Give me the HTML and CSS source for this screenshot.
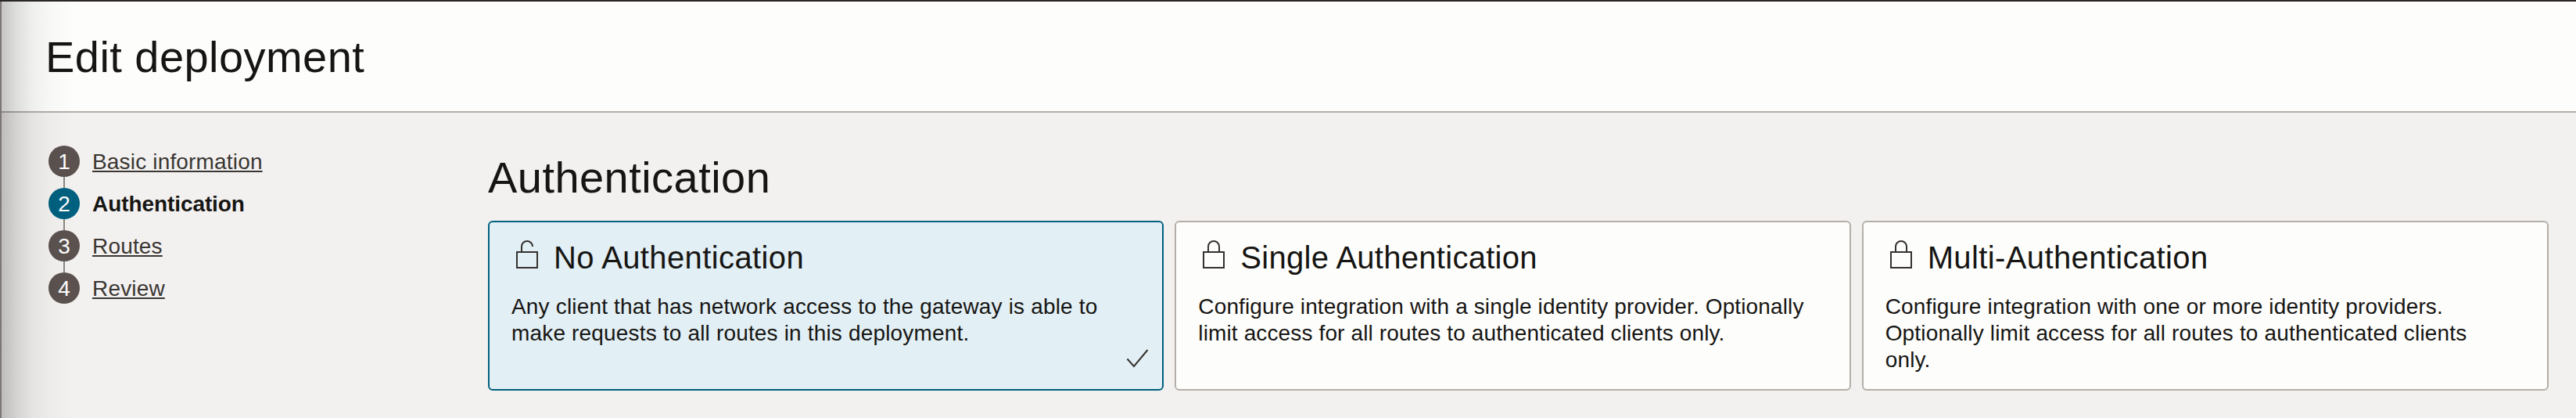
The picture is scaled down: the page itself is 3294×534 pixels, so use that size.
FILE: index.html
```html
<!DOCTYPE html>
<html lang="en">
<head>
<meta charset="utf-8">
<title>Edit deployment</title>
<link rel="stylesheet" href="styles.css">
</head>
<body>
<div class="panel">
  <header class="header"><h1 class="title">Edit deployment</h1></header>
  <div class="body">
    <nav class="steps">
      <ol class="step-list">
        <li class="step"><span class="num">1</span><a class="link">Basic information</a></li>
        <li class="step current"><span class="num">2</span><span class="link">Authentication</span></li>
        <li class="step"><span class="num">3</span><a class="link">Routes</a></li>
        <li class="step"><span class="num">4</span><a class="link">Review</a></li>
      </ol>
    </nav>
    <main class="main">
      <h2 class="section-title">Authentication</h2>
      <div class="cards">
        <section class="card selected">
          <h3 class="card-title">
            <svg class="icon" viewBox="0 0 40 48"><path d="M7 17H33V37H7Z M13 17V10A7 7 0 0 1 27 10"/></svg>
            <span>No Authentication</span>
          </h3>
          <p class="text">Any client that has network access to the gateway is able to make requests to all routes in this deployment.</p>
          <svg class="check" viewBox="0 0 32 28"><path d="M3.500 15.500L12 25L29.500 4"/></svg>
        </section>
        <section class="card single">
          <h3 class="card-title">
            <svg class="icon" viewBox="0 0 40 48"><path d="M7 17H33V37H7Z M13 17V10A7 7 0 0 1 27 10V17"/></svg>
            <span>Single Authentication</span>
          </h3>
          <p class="text">Configure integration with a single identity provider. Optionally limit access for all routes to authenticated clients only.</p>
        </section>
        <section class="card">
          <h3 class="card-title">
            <svg class="icon" viewBox="0 0 40 48"><path d="M7 17H33V37H7Z M13 17V10A7 7 0 0 1 27 10V17"/></svg>
            <span>Multi-Authentication</span>
          </h3>
          <p class="text">Configure integration with one or more identity providers. Optionally limit access for all routes to authenticated clients only.</p>
        </section>
      </div>
    </main>
  </div>
  <div class="edge-shadow"></div>
</div>
</body>
</html>
```
FILE: styles.css
```css
* {
  box-sizing: border-box;
}

body {
  margin: 0;
  background: #f3f1f0;
  color: #161513;
  font-family: "Liberation Sans", Arial, sans-serif;
  font-size: 28px;
  line-height: 34px;
  letter-spacing: 0.17px;
}

h1, h2, h3, p, ol {
  margin: 0;
  padding: 0;
  font-weight: 400;
}

.panel {
  position: relative;
  height: 534px;
  overflow: hidden;
  border-top: 2px solid #2b2626;
}

.header {
  height: 142px;
  padding: 39px 0 0 58px;
  background: #fdfdfb;
  border-bottom: 2px solid #b5aea8;
}

.title,
.section-title {
  font-size: 56px;
  line-height: 64px;
  letter-spacing: 0.45px;
}

.body {
  display: flex;
}

.steps {
  width: 624px;
  flex: none;
  padding: 42px 0 0 62px;
}

.step-list {
  display: flex;
  flex-direction: column;
  gap: 14px;
  list-style: none;
}

.step {
  position: relative;
  display: flex;
  align-items: center;
  gap: 16px;
  height: 40px;
}

.step:not(:last-child)::after {
  content: "";
  position: absolute;
  left: 19px;
  top: 40px;
  width: 2px;
  height: 14px;
  background: #8b8580;
}

.num {
  width: 40px;
  height: 40px;
  padding-top: 1px;
  border-radius: 50%;
  background: #5b524f;
  color: #fff;
  line-height: 39px;
  letter-spacing: 0;
  text-align: center;
}

.link {
  padding-top: 2px;
  color: #3a3632;
  text-decoration: underline;
  text-decoration-thickness: 2px;
  text-underline-offset: 2px;
}

.current .num {
  background: #00607f;
}

.current .link {
  color: #161513;
  font-weight: 700;
  letter-spacing: -0.08px;
  text-decoration: none;
}

.main {
  flex: 1;
  padding: 51px 35px 0 0;
}

.section-title {
  margin-bottom: 23px;
}

.cards {
  display: grid;
  grid-template-columns: repeat(3, 1fr);
}

.card {
  position: relative;
  height: 217px;
  padding: 21px 50px 0 28px;
  border: 2px solid #b5aea8;
  border-radius: 6px;
  background: #fdfdfb;
}

.card:not(:last-child) {
  margin-right: 14px;
}

.card.selected {
  border-color: #00607f;
  background: #e2eff4;
}

.card-title {
  display: flex;
  gap: 14px;
  margin-bottom: 22px;
  font-size: 40px;
  line-height: 48px;
  letter-spacing: 0.38px;
}

.single .card-title {
  letter-spacing: 0.28px;
}

.single .text {
  letter-spacing: 0.13px;
}

.icon {
  width: 40px;
  height: 48px;
  flex: none;
}

.icon path,
.check path {
  fill: none;
  stroke: #35312e;
  stroke-width: 2;
}

.check {
  position: absolute;
  right: 16px;
  bottom: 26px;
  width: 32px;
  height: 28px;
}

.edge-shadow {
  position: absolute;
  left: 0;
  top: 0;
  width: 96px;
  height: 100%;
  border-left: 2px solid #7c7774;
  background: linear-gradient(to right, rgba(0, 0, 0, 0.22), rgba(0, 0, 0, 0.125) 20%, rgba(0, 0, 0, 0.055) 42%, rgba(0, 0, 0, 0.018) 68%, rgba(0, 0, 0, 0));
  pointer-events: none;
}
```
